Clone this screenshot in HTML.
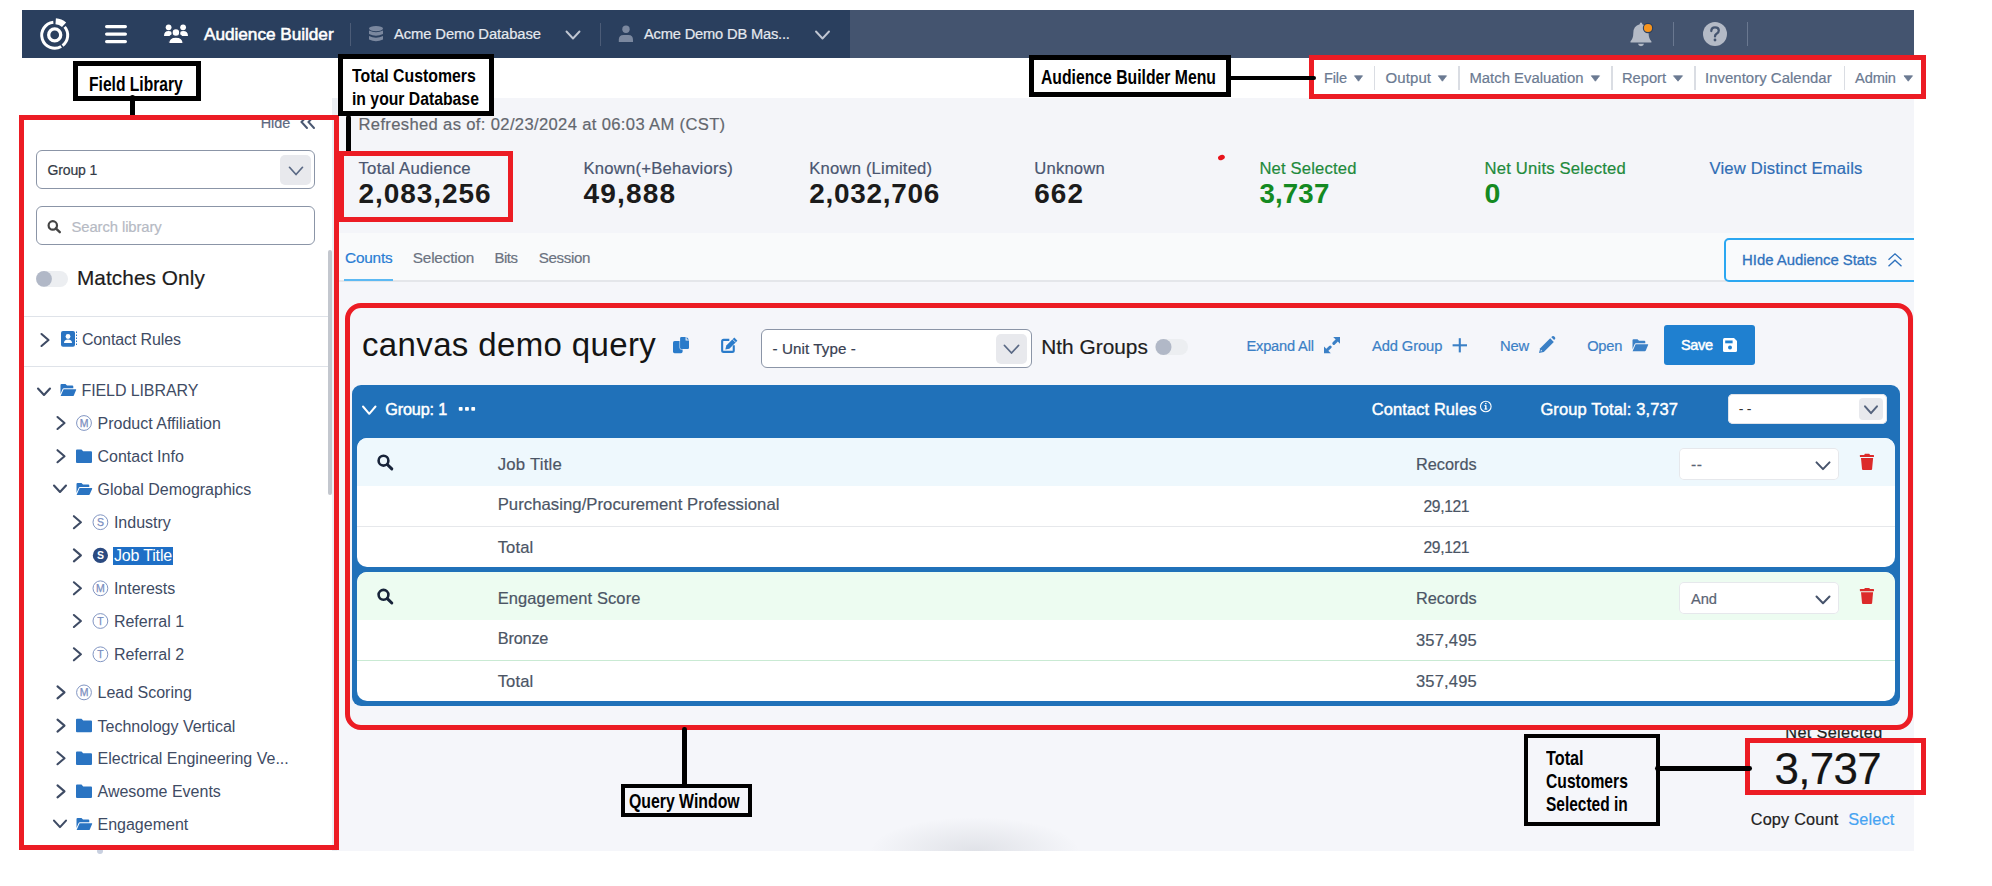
<!DOCTYPE html>
<html><head><meta charset="utf-8"><title>Audience Builder</title>
<style>
html,body{margin:0;padding:0;}
body{width:1992px;height:886px;position:relative;overflow:hidden;background:#fff;font-family:"Liberation Sans", sans-serif;}
body>div,body>svg{position:absolute;}
</style></head><body>
<div style="left:332px;top:98px;width:1582px;height:753px;background:#f5f6fa;"></div>
<div style="left:332px;top:98px;width:1582px;height:135px;background:#f4f5f9;"></div>
<div style="left:332px;top:233px;width:1582px;height:47px;background:#f9fafb;"></div>
<div style="left:332px;top:280px;width:1582px;height:1.6000000000000227px;background:#e4e6ea;"></div>
<div style="left:332px;top:98px;width:5px;height:753px;background:#edf0f4;"></div>
<div style="left:860px;top:815px;width:230px;height:36px;background:radial-gradient(ellipse 105px 34px at 50% 100%, rgba(40,50,70,0.10), rgba(40,50,70,0) 100%);"></div>
<div style="left:22px;top:10px;width:828px;height:48px;background:#2a3f5e;"></div>
<div style="left:850px;top:10px;width:1064px;height:48px;background:#44546f;"></div>
<svg style="left:0px;top:0px;" width="120" height="70" viewBox="0 0 120 70"><path d="M61.20 46.46A13.0 13.0 0 1 1 53.34 22.27" fill="none" stroke="#fff" stroke-width="3.0"/><path d="M64.66 26.84A13.0 13.0 0 0 1 62.52 45.58" fill="none" stroke="#fff" stroke-width="3.0"/><path d="M55.68 21.23A14.0 14.0 0 0 1 64.07 24.80" fill="none" stroke="#fff" stroke-width="6.2"/><circle cx="54.7" cy="34.900000000000006" r="6" fill="none" stroke="#fff" stroke-width="3.3"/></svg>
<svg style="left:0px;top:0px;" width="140" height="70" viewBox="0 0 140 70"><line x1="106.6" y1="26.6" x2="125.4" y2="26.6" stroke="#fff" stroke-width="3.2" stroke-linecap="round"/><line x1="106.6" y1="34.1" x2="125.4" y2="34.1" stroke="#fff" stroke-width="3.2" stroke-linecap="round"/><line x1="106.6" y1="41.6" x2="125.4" y2="41.6" stroke="#fff" stroke-width="3.2" stroke-linecap="round"/></svg>
<svg style="left:0px;top:0px;" width="200" height="60" viewBox="0 0 200 60"><circle cx="168.6" cy="27.3" r="2.9" fill="#fff"/><circle cx="183.1" cy="27.3" r="2.9" fill="#fff"/><path d="M164 36 Q164 31 168.6 31 Q172 31 172.8 33.5 Q170 35 169.5 36 Z" fill="#fff"/><path d="M188 36 Q188 31 183.1 31 Q179.7 31 179 33.5 Q181.8 35 182.2 36 Z" fill="#fff"/><circle cx="175.9" cy="32.4" r="3.9" fill="#fff" stroke="#2c3e5d" stroke-width="1.3"/><path d="M168.6 43.6 Q168.6 37 175.9 37 Q183.2 37 183.2 43.6 Z" fill="#fff" stroke="#2c3e5d" stroke-width="1.3"/></svg>
<div style="left:204.0px;top:24.00px;font-family:'Liberation Sans', sans-serif;font-size:17.23px;font-weight:400;color:#ffffff;-webkit-text-stroke:0.55px #ffffff;letter-spacing:-0.036px;white-space:nowrap;line-height:normal;">Audience Builder</div>
<div style="left:350px;top:22.5px;width:1.1999999999999886px;height:23.0px;background:#4c5c77;"></div>
<svg style="left:0px;top:0px;" width="400" height="60" viewBox="0 0 400 60"><ellipse cx="376" cy="28.6" rx="7" ry="2.6" fill="#7b889f"/><path d="M369 30.5 Q376 34 383 30.5 V34 Q376 37.5 369 34 Z" fill="#7b889f"/><path d="M369 36 Q376 39.5 383 36 V39.4 Q376 43 369 39.4 Z" fill="#7b889f"/></svg>
<div style="left:394.0px;top:26.00px;font-family:'Liberation Sans', sans-serif;font-size:14.79px;font-weight:400;color:#e6e9ef;-webkit-text-stroke:0.2px #e6e9ef;letter-spacing:-0.106px;white-space:nowrap;line-height:normal;">Acme Demo Database</div>
<svg style="left:0px;top:0px;" width="600" height="60" viewBox="0 0 600 60"><polyline points="566.5,31.5 573.0,38.5 579.5,31.5" fill="none" stroke="#c0c6d2" stroke-width="1.9" stroke-linecap="round" stroke-linejoin="round"/></svg>
<div style="left:600px;top:22.5px;width:1.2000000000000455px;height:23.299999999999997px;background:#4c5c77;"></div>
<svg style="left:0px;top:0px;" width="650" height="60" viewBox="0 0 650 60"><circle cx="626" cy="29.3" r="3.7" fill="#7b889f"/><path d="M618.8 42 V39.8 Q618.8 35 623.5 35 H628.5 Q633 35 633 39.8 V42 Z" fill="#7b889f"/></svg>
<div style="left:644.0px;top:26.00px;font-family:'Liberation Sans', sans-serif;font-size:14.66px;font-weight:400;color:#e6e9ef;-webkit-text-stroke:0.2px #e6e9ef;letter-spacing:-0.173px;white-space:nowrap;line-height:normal;">Acme Demo DB Mas...</div>
<svg style="left:0px;top:0px;" width="850" height="60" viewBox="0 0 850 60"><polyline points="816,31.5 822.5,38.5 829,31.5" fill="none" stroke="#c0c6d2" stroke-width="1.9" stroke-linecap="round" stroke-linejoin="round"/></svg>
<svg style="left:0px;top:0px;" width="1700" height="60" viewBox="0 0 1700 60"><path d="M1641 22.5 Q1642.3 22.5 1642.3 24.2 Q1648.6 25.8 1648.6 33 Q1648.6 38.5 1651.4 41.2 V42.6 H1630.5 V41.2 Q1633.3 38.5 1633.3 33 Q1633.3 25.8 1639.7 24.2 Q1639.7 22.5 1641 22.5 Z" fill="#b4bac6"/><path d="M1638 43.8 H1644 Q1643.6 46.2 1641 46.2 Q1638.4 46.2 1638 43.8 Z" fill="#b4bac6"/><circle cx="1648" cy="28" r="5.2" fill="#2c3e5d"/><circle cx="1648" cy="28" r="4.1" fill="#f7941d"/></svg>
<div style="left:1673px;top:22px;width:1.2000000000000455px;height:23.700000000000003px;background:#6a7890;"></div>
<svg style="left:0px;top:0px;" width="1800" height="60" viewBox="0 0 1800 60"><circle cx="1715" cy="34" r="12" fill="#b4bac6"/><path d="M1711.3 31 Q1711.3 27.3 1715 27.3 Q1718.8 27.3 1718.8 30.6 Q1718.8 32.6 1716.6 33.8 Q1715 34.7 1715 36.4" fill="none" stroke="#44546f" stroke-width="2.3" stroke-linecap="round"/><circle cx="1715" cy="40" r="1.4" fill="#44546f"/></svg>
<div style="left:1746.8px;top:22px;width:1.2000000000000455px;height:23.700000000000003px;background:#6a7890;"></div>
<div style="left:1324.0px;top:70.00px;font-family:'Liberation Sans', sans-serif;font-size:14.55px;font-weight:400;color:#6b7a92;-webkit-text-stroke:0.2px #6b7a92;letter-spacing:-0.148px;white-space:nowrap;line-height:normal;">File</div>
<div style="left:1385.5px;top:69.00px;font-family:'Liberation Sans', sans-serif;font-size:14.99px;font-weight:400;color:#6b7a92;-webkit-text-stroke:0.2px #6b7a92;letter-spacing:0.099px;white-space:nowrap;line-height:normal;">Output</div>
<div style="left:1469.5px;top:70.00px;font-family:'Liberation Sans', sans-serif;font-size:14.84px;font-weight:400;color:#6b7a92;-webkit-text-stroke:0.2px #6b7a92;letter-spacing:0.009px;white-space:nowrap;line-height:normal;">Match Evaluation</div>
<div style="left:1622.0px;top:70.00px;font-family:'Liberation Sans', sans-serif;font-size:14.74px;font-weight:400;color:#6b7a92;-webkit-text-stroke:0.2px #6b7a92;letter-spacing:-0.050px;white-space:nowrap;line-height:normal;">Report</div>
<div style="left:1705.0px;top:70.00px;font-family:'Liberation Sans', sans-serif;font-size:14.91px;font-weight:400;color:#6b7a92;-webkit-text-stroke:0.2px #6b7a92;letter-spacing:0.042px;white-space:nowrap;line-height:normal;">Inventory Calendar</div>
<div style="left:1855.0px;top:70.00px;font-family:'Liberation Sans', sans-serif;font-size:14.65px;font-weight:400;color:#6b7a92;-webkit-text-stroke:0.2px #6b7a92;letter-spacing:-0.128px;white-space:nowrap;line-height:normal;">Admin</div>
<svg style="left:0px;top:0px;" width="1992" height="100" viewBox="0 0 1992 100"><path d="M1354.5 75.8 H1362.5 L1358.5 81.2 Z" fill="#6b7a92" stroke="#6b7a92" stroke-width="0.8" stroke-linejoin="round"/><path d="M1438.3 75.8 H1446.5 L1442.4 81.2 Z" fill="#6b7a92" stroke="#6b7a92" stroke-width="0.8" stroke-linejoin="round"/><path d="M1591.3 75.8 H1599.5 L1595.4 81.2 Z" fill="#6b7a92" stroke="#6b7a92" stroke-width="0.8" stroke-linejoin="round"/><path d="M1673.5 75.8 H1682.5 L1678.0 81.2 Z" fill="#6b7a92" stroke="#6b7a92" stroke-width="0.8" stroke-linejoin="round"/><path d="M1904 75.8 H1912.5 L1908.25 81.2 Z" fill="#6b7a92" stroke="#6b7a92" stroke-width="0.8" stroke-linejoin="round"/></svg>
<div style="left:1374.2px;top:66px;width:1.2000000000000455px;height:23.5px;background:#dadde3;"></div>
<div style="left:1458.4px;top:66px;width:1.2000000000000455px;height:23.5px;background:#dadde3;"></div>
<div style="left:1611.4px;top:66px;width:1.2000000000000455px;height:23.5px;background:#dadde3;"></div>
<div style="left:1694.4px;top:66px;width:1.2000000000000455px;height:23.5px;background:#dadde3;"></div>
<div style="left:1844.3px;top:66px;width:1.2000000000000455px;height:23.5px;background:#dadde3;"></div>
<div style="left:358.5px;top:115.00px;font-family:'Liberation Sans', sans-serif;font-size:16.58px;font-weight:400;color:#63676e;-webkit-text-stroke:0.2px #63676e;letter-spacing:0.353px;white-space:nowrap;line-height:normal;">Refreshed as of: 02/23/2024 at 06:03 AM (CST)</div>
<div style="left:358.5px;top:159.00px;font-family:'Liberation Sans', sans-serif;font-size:16.75px;font-weight:400;color:#4a5670;-webkit-text-stroke:0.2px #4a5670;letter-spacing:0.239px;white-space:nowrap;line-height:normal;">Total Audience</div>
<div style="left:358.5px;top:178.00px;font-family:'Liberation Sans', sans-serif;font-size:28.03px;font-weight:700;color:#1b1b1b;letter-spacing:0.924px;white-space:nowrap;line-height:normal;">2,083,256</div>
<div style="left:583.5px;top:159.00px;font-family:'Liberation Sans', sans-serif;font-size:16.67px;font-weight:400;color:#4a5670;-webkit-text-stroke:0.2px #4a5670;letter-spacing:0.215px;white-space:nowrap;line-height:normal;">Known(+Behaviors)</div>
<div style="left:583.5px;top:178.00px;font-family:'Liberation Sans', sans-serif;font-size:28.08px;font-weight:700;color:#1b1b1b;letter-spacing:1.125px;white-space:nowrap;line-height:normal;">49,888</div>
<div style="left:809.3px;top:159.00px;font-family:'Liberation Sans', sans-serif;font-size:16.64px;font-weight:400;color:#4a5670;-webkit-text-stroke:0.2px #4a5670;letter-spacing:0.189px;white-space:nowrap;line-height:normal;">Known (Limited)</div>
<div style="left:809.3px;top:178.00px;font-family:'Liberation Sans', sans-serif;font-size:27.94px;font-weight:700;color:#1b1b1b;letter-spacing:0.714px;white-space:nowrap;line-height:normal;">2,032,706</div>
<div style="left:1034.2px;top:159.00px;font-family:'Liberation Sans', sans-serif;font-size:16.61px;font-weight:400;color:#4a5670;-webkit-text-stroke:0.2px #4a5670;letter-spacing:0.228px;white-space:nowrap;line-height:normal;">Unknown</div>
<div style="left:1034.2px;top:178.00px;font-family:'Liberation Sans', sans-serif;font-size:27.95px;font-weight:700;color:#1b1b1b;letter-spacing:1.129px;white-space:nowrap;line-height:normal;">662</div>
<div style="left:1259.4px;top:159.00px;font-family:'Liberation Sans', sans-serif;font-size:16.63px;font-weight:400;color:#1f8a3c;-webkit-text-stroke:0.2px #1f8a3c;letter-spacing:0.181px;white-space:nowrap;line-height:normal;">Net Selected</div>
<div style="left:1259.4px;top:178.00px;font-family:'Liberation Sans', sans-serif;font-size:27.68px;font-weight:700;color:#148a22;letter-spacing:0.158px;white-space:nowrap;line-height:normal;">3,737</div>
<div style="left:1484.5px;top:159.00px;font-family:'Liberation Sans', sans-serif;font-size:16.67px;font-weight:400;color:#1f8a3c;-webkit-text-stroke:0.2px #1f8a3c;letter-spacing:0.191px;white-space:nowrap;line-height:normal;">Net Units Selected</div>
<div style="left:1484.5px;top:177.00px;font-family:'Liberation Sans', sans-serif;font-size:28.50px;font-weight:700;color:#148a22;letter-spacing:0.000px;white-space:nowrap;line-height:normal;">0</div>
<div style="left:1709.5px;top:159.00px;font-family:'Liberation Sans', sans-serif;font-size:16.65px;font-weight:400;color:#2f6db5;-webkit-text-stroke:0.2px #2f6db5;letter-spacing:0.175px;white-space:nowrap;line-height:normal;">View Distinct Emails</div>
<div style="left:1217.8px;top:155px;width:7px;height:5.4px;border-radius:50%;background:#e8141c;transform:rotate(-20deg)"></div>
<div style="left:345.0px;top:249.00px;font-family:'Liberation Sans', sans-serif;font-size:15.38px;font-weight:400;color:#2a7dd4;-webkit-text-stroke:0.2px #2a7dd4;letter-spacing:-0.204px;white-space:nowrap;line-height:normal;">Counts</div>
<div style="left:412.8px;top:249.00px;font-family:'Liberation Sans', sans-serif;font-size:15.32px;font-weight:400;color:#6b7280;-webkit-text-stroke:0.2px #6b7280;letter-spacing:-0.192px;white-space:nowrap;line-height:normal;">Selection</div>
<div style="left:494.4px;top:249.00px;font-family:'Liberation Sans', sans-serif;font-size:14.93px;font-weight:400;color:#6b7280;-webkit-text-stroke:0.2px #6b7280;letter-spacing:-0.428px;white-space:nowrap;line-height:normal;">Bits</div>
<div style="left:538.8px;top:249.00px;font-family:'Liberation Sans', sans-serif;font-size:15.11px;font-weight:400;color:#6b7280;-webkit-text-stroke:0.2px #6b7280;letter-spacing:-0.346px;white-space:nowrap;line-height:normal;">Session</div>
<div style="left:344px;top:278.5px;width:48.69999999999999px;height:2.5px;background:#5cb9f3;"></div>
<div style="left:1723.7px;top:238px;width:206.29999999999995px;height:43.60000000000002px;box-sizing:border-box;border:2px solid #2ba7f1;border-radius:5px;background:#f9fafc;"></div>
<div style="left:1742.1px;top:252.00px;font-family:'Liberation Sans', sans-serif;font-size:14.91px;font-weight:400;color:#2f72bd;-webkit-text-stroke:0.3px #2f72bd;letter-spacing:-0.030px;white-space:nowrap;line-height:normal;">HIde Audience Stats</div>
<svg style="left:0px;top:0px;" width="1992" height="300" viewBox="0 0 1992 300"><polyline points="1888.5,259.8 1895,253.8 1901.5,259.8" fill="none" stroke="#2f72bd" stroke-width="1.3"/><polyline points="1888.5,266.2 1895,260.2 1901.5,266.2" fill="none" stroke="#2f72bd" stroke-width="1.3"/></svg>
<div style="left:1914px;top:230px;width:78px;height:70px;background:#ffffff;"></div>
<div style="left:260.8px;top:115.00px;font-family:'Liberation Sans', sans-serif;font-size:14.42px;font-weight:400;color:#5d6980;-webkit-text-stroke:0.2px #5d6980;letter-spacing:-0.082px;white-space:nowrap;line-height:normal;">Hide</div>
<svg style="left:0px;top:0px;" width="340" height="140" viewBox="0 0 340 140"><polyline points="307,116 301.5,122 307,128" fill="none" stroke="#4a5872" stroke-width="2" stroke-linecap="round"/><polyline points="314,116 308.5,122 314,128" fill="none" stroke="#4a5872" stroke-width="2" stroke-linecap="round"/></svg>
<div style="left:36.3px;top:150.3px;width:279.09999999999997px;height:39.0px;box-sizing:border-box;border:1.1px solid #8b95a7;border-radius:6px;background:#fff;"></div>
<div style="left:280.1px;top:155.4px;width:30.69999999999999px;height:29.400000000000006px;background:#e8e9ed;border-radius:5px;"></div>
<svg style="left:0px;top:0px;" width="340" height="200" viewBox="0 0 340 200"><polyline points="289.5,167.3 296.0,174.5 302.5,167.3" fill="none" stroke="#5a6985" stroke-width="1.7" stroke-linecap="round" stroke-linejoin="round"/></svg>
<div style="left:47.5px;top:162.00px;font-family:'Liberation Sans', sans-serif;font-size:14.00px;font-weight:400;color:#333a46;-webkit-text-stroke:0.2px #333a46;letter-spacing:-0.147px;white-space:nowrap;line-height:normal;">Group 1</div>
<div style="left:36.3px;top:206.3px;width:279.09999999999997px;height:39.0px;box-sizing:border-box;border:1.1px solid #8b95a7;border-radius:6px;background:#fff;"></div>
<svg style="left:0px;top:0px;" width="340" height="260" viewBox="0 0 340 260"><circle cx="52.8" cy="225.4" r="4.2" fill="none" stroke="#444" stroke-width="2.2"/><line x1="55.8" y1="228.4" x2="59.8" y2="232.2" stroke="#444" stroke-width="2.4" stroke-linecap="round"/></svg>
<div style="left:71.5px;top:219.00px;font-family:'Liberation Sans', sans-serif;font-size:14.80px;font-weight:400;color:#b6bac4;-webkit-text-stroke:0.2px #b6bac4;letter-spacing:-0.079px;white-space:nowrap;line-height:normal;">Search library</div>
<div style="left:36px;top:271px;width:32px;height:15.600000000000023px;background:#eceef1;border-radius:8px;"></div>
<svg style="left:0px;top:0px;" width="100" height="300" viewBox="0 0 100 300"><circle cx="44" cy="278.8" r="7.9" fill="#b1b8c7"/></svg>
<div style="left:77.0px;top:266.00px;font-family:'Liberation Sans', sans-serif;font-size:20.77px;font-weight:400;color:#1c1c1c;-webkit-text-stroke:0.2px #1c1c1c;letter-spacing:0.074px;white-space:nowrap;line-height:normal;">Matches Only</div>
<div style="left:24px;top:315.5px;width:304px;height:1.1999999999999886px;background:#dfe3e9;"></div>
<div style="left:327.6px;top:250px;width:4.399999999999977px;height:245px;background:#c3c7ce;border-radius:2px;"></div>
<svg style="left:0px;top:0px;" width="340" height="360" viewBox="0 0 340 360"><polyline points="41.5,334 48.5,340.0 41.5,346" fill="none" stroke="#3e4b64" stroke-width="2.1" stroke-linecap="round" stroke-linejoin="round"/></svg>
<svg style="left:0px;top:0px;" width="340" height="360" viewBox="0 0 340 360"><rect x="61" y="331" width="14" height="15.8" rx="2" fill="#2a74c2"/><circle cx="68" cy="336.5" r="2.4" fill="#fff"/><path d="M64 343 Q64 339.4 68 339.4 Q72 339.4 72 343 Z" fill="#fff"/><line x1="76.5" y1="331.5" x2="76.5" y2="346" stroke="#2a74c2" stroke-width="1" stroke-dasharray="1.5 1.5"/></svg>
<div style="left:81.9px;top:331.00px;font-family:'Liberation Sans', sans-serif;font-size:16.00px;font-weight:400;color:#3e4b64;letter-spacing:-0.116px;white-space:nowrap;line-height:normal;">Contact Rules</div>
<div style="left:24px;top:366px;width:304px;height:1.1999999999999886px;background:#dfe3e9;"></div>
<div style="left:81.5px;top:382.00px;font-family:'Liberation Sans', sans-serif;font-size:16.00px;font-weight:400;color:#3e4b64;letter-spacing:-0.097px;white-space:nowrap;line-height:normal;">FIELD LIBRARY</div>
<div style="left:97.5px;top:415.00px;font-family:'Liberation Sans', sans-serif;font-size:16.00px;font-weight:400;color:#3e4b64;letter-spacing:0.000px;white-space:nowrap;line-height:normal;">Product Affiliation</div>
<div style="left:97.5px;top:448.00px;font-family:'Liberation Sans', sans-serif;font-size:16.00px;font-weight:400;color:#3e4b64;letter-spacing:0.000px;white-space:nowrap;line-height:normal;">Contact Info</div>
<div style="left:97.5px;top:481.00px;font-family:'Liberation Sans', sans-serif;font-size:16.00px;font-weight:400;color:#3e4b64;letter-spacing:0.000px;white-space:nowrap;line-height:normal;">Global Demographics</div>
<div style="left:113.9px;top:514.00px;font-family:'Liberation Sans', sans-serif;font-size:16.00px;font-weight:400;color:#3e4b64;letter-spacing:0.000px;white-space:nowrap;line-height:normal;">Industry</div>
<div style="left:112.8px;top:547px;width:60.2px;height:17.600000000000023px;background:#1e6fc6;"></div>
<div style="left:113.9px;top:547.00px;font-family:'Liberation Sans', sans-serif;font-size:16.00px;font-weight:400;color:#ffffff;letter-spacing:-0.159px;white-space:nowrap;line-height:normal;">Job Title</div>
<div style="left:113.9px;top:580.00px;font-family:'Liberation Sans', sans-serif;font-size:16.00px;font-weight:400;color:#3e4b64;letter-spacing:0.000px;white-space:nowrap;line-height:normal;">Interests</div>
<div style="left:113.9px;top:613.00px;font-family:'Liberation Sans', sans-serif;font-size:16.00px;font-weight:400;color:#3e4b64;letter-spacing:0.000px;white-space:nowrap;line-height:normal;">Referral 1</div>
<div style="left:113.9px;top:646.00px;font-family:'Liberation Sans', sans-serif;font-size:16.00px;font-weight:400;color:#3e4b64;letter-spacing:0.000px;white-space:nowrap;line-height:normal;">Referral 2</div>
<div style="left:97.5px;top:684.00px;font-family:'Liberation Sans', sans-serif;font-size:16.00px;font-weight:400;color:#3e4b64;letter-spacing:0.000px;white-space:nowrap;line-height:normal;">Lead Scoring</div>
<div style="left:97.5px;top:718.00px;font-family:'Liberation Sans', sans-serif;font-size:16.00px;font-weight:400;color:#3e4b64;letter-spacing:0.000px;white-space:nowrap;line-height:normal;">Technology Vertical</div>
<div style="left:97.5px;top:750.00px;font-family:'Liberation Sans', sans-serif;font-size:16.00px;font-weight:400;color:#3e4b64;letter-spacing:0.000px;white-space:nowrap;line-height:normal;">Electrical Engineering Ve...</div>
<div style="left:97.5px;top:783.00px;font-family:'Liberation Sans', sans-serif;font-size:16.00px;font-weight:400;color:#3e4b64;letter-spacing:0.000px;white-space:nowrap;line-height:normal;">Awesome Events</div>
<div style="left:97.5px;top:816.00px;font-family:'Liberation Sans', sans-serif;font-size:16.00px;font-weight:400;color:#3e4b64;letter-spacing:0.000px;white-space:nowrap;line-height:normal;">Engagement</div>
<svg style="left:0px;top:0px;" width="340" height="886" viewBox="0 0 340 886"><polyline points="38,388.5 44.0,395 50,388.5" fill="none" stroke="#3e4b64" stroke-width="2.1" stroke-linecap="round" stroke-linejoin="round"/><path d="M60.5 394.1 V385.1 Q60.5 384.1 61.5 384.1 H65.5 L67 385.6 H72.3 Q73.3 385.6 73.3 386.6 V388.20000000000005 H64 Q63 388.20000000000005 62.6 389.1 Z" fill="#2a74c2"/><path d="M63.6 389.20000000000005 H75.8 Q76.4 389.20000000000005 76.1 390.0 L73.8 395.40000000000003 Q73.5 396.1 72.8 396.1 H60.6 Z" fill="#2a74c2"/><polyline points="57.5,417.0 64.5,423.0 57.5,429.0" fill="none" stroke="#3e4b64" stroke-width="2.1" stroke-linecap="round" stroke-linejoin="round"/><circle cx="84" cy="423.0" r="7.4" fill="none" stroke="#8195c2" stroke-width="1"/><text x="84" y="426.8" font-family="Liberation Sans" font-size="10.5" fill="#7a8ec0" stroke="#7a8ec0" stroke-width="0.25" text-anchor="middle">M</text><polyline points="57.5,450.2 64.5,456.2 57.5,462.2" fill="none" stroke="#3e4b64" stroke-width="2.1" stroke-linecap="round" stroke-linejoin="round"/><path d="M76 450.4 Q76 449.4 77 449.4 H81.5 L83.2 451.2 H91 Q92 451.2 92 452.2 V461.9 Q92 462.9 91 462.9 H77 Q76 462.9 76 461.9 Z" fill="#2a74c2"/><rect x="76" y="452.59999999999997" width="16" height="0.9" fill="#fff" opacity="0.0"/><polyline points="54,485.5 60.0,492.0 66,485.5" fill="none" stroke="#3e4b64" stroke-width="2.1" stroke-linecap="round" stroke-linejoin="round"/><path d="M76.5 493.0 V484.0 Q76.5 483.0 77.5 483.0 H81.5 L83 484.5 H88.3 Q89.3 484.5 89.3 485.5 V487.1 H80 Q79 487.1 78.6 488.0 Z" fill="#2a74c2"/><path d="M79.6 488.1 H91.8 Q92.4 488.1 92.1 488.9 L89.8 494.3 Q89.5 495.0 88.8 495.0 H76.6 Z" fill="#2a74c2"/><polyline points="73.9,516.2 80.9,522.2 73.9,528.2" fill="none" stroke="#3e4b64" stroke-width="2.1" stroke-linecap="round" stroke-linejoin="round"/><circle cx="100.4" cy="522.2" r="7.4" fill="none" stroke="#8195c2" stroke-width="1"/><text x="100.4" y="526.0" font-family="Liberation Sans" font-size="10.5" fill="#7a8ec0" stroke="#7a8ec0" stroke-width="0.25" text-anchor="middle">S</text><polyline points="73.9,549.4 80.9,555.4 73.9,561.4" fill="none" stroke="#3e4b64" stroke-width="2.1" stroke-linecap="round" stroke-linejoin="round"/><circle cx="100.4" cy="555.4" r="7.6" fill="#2b4a80"/><text x="100.4" y="559.3" font-family="Liberation Sans" font-weight="700" font-size="10.5" fill="#fff" text-anchor="middle">S</text><polyline points="73.9,582.3 80.9,588.3 73.9,594.3" fill="none" stroke="#3e4b64" stroke-width="2.1" stroke-linecap="round" stroke-linejoin="round"/><circle cx="100.4" cy="588.3" r="7.4" fill="none" stroke="#8195c2" stroke-width="1"/><text x="100.4" y="592.0999999999999" font-family="Liberation Sans" font-size="10.5" fill="#7a8ec0" stroke="#7a8ec0" stroke-width="0.25" text-anchor="middle">M</text><polyline points="73.9,615.0 80.9,621.0 73.9,627.0" fill="none" stroke="#3e4b64" stroke-width="2.1" stroke-linecap="round" stroke-linejoin="round"/><circle cx="100.4" cy="621.0" r="7.4" fill="none" stroke="#8195c2" stroke-width="1"/><text x="100.4" y="624.8" font-family="Liberation Sans" font-size="10.5" fill="#7a8ec0" stroke="#7a8ec0" stroke-width="0.25" text-anchor="middle">T</text><polyline points="73.9,648.3 80.9,654.3 73.9,660.3" fill="none" stroke="#3e4b64" stroke-width="2.1" stroke-linecap="round" stroke-linejoin="round"/><circle cx="100.4" cy="654.3" r="7.4" fill="none" stroke="#8195c2" stroke-width="1"/><text x="100.4" y="658.0999999999999" font-family="Liberation Sans" font-size="10.5" fill="#7a8ec0" stroke="#7a8ec0" stroke-width="0.25" text-anchor="middle">T</text><polyline points="57.5,686.4 64.5,692.4 57.5,698.4" fill="none" stroke="#3e4b64" stroke-width="2.1" stroke-linecap="round" stroke-linejoin="round"/><circle cx="84" cy="692.4" r="7.4" fill="none" stroke="#8195c2" stroke-width="1"/><text x="84" y="696.1999999999999" font-family="Liberation Sans" font-size="10.5" fill="#7a8ec0" stroke="#7a8ec0" stroke-width="0.25" text-anchor="middle">M</text><polyline points="57.5,719.6 64.5,725.6 57.5,731.6" fill="none" stroke="#3e4b64" stroke-width="2.1" stroke-linecap="round" stroke-linejoin="round"/><path d="M76 719.8000000000001 Q76 718.8000000000001 77 718.8000000000001 H81.5 L83.2 720.6 H91 Q92 720.6 92 721.6 V731.3000000000001 Q92 732.3000000000001 91 732.3000000000001 H77 Q76 732.3000000000001 76 731.3000000000001 Z" fill="#2a74c2"/><rect x="76" y="722.0000000000001" width="16" height="0.9" fill="#fff" opacity="0.0"/><polyline points="57.5,752.2 64.5,758.2 57.5,764.2" fill="none" stroke="#3e4b64" stroke-width="2.1" stroke-linecap="round" stroke-linejoin="round"/><path d="M76 752.4000000000001 Q76 751.4000000000001 77 751.4000000000001 H81.5 L83.2 753.2 H91 Q92 753.2 92 754.2 V763.9000000000001 Q92 764.9000000000001 91 764.9000000000001 H77 Q76 764.9000000000001 76 763.9000000000001 Z" fill="#2a74c2"/><rect x="76" y="754.6000000000001" width="16" height="0.9" fill="#fff" opacity="0.0"/><polyline points="57.5,785.4 64.5,791.4 57.5,797.4" fill="none" stroke="#3e4b64" stroke-width="2.1" stroke-linecap="round" stroke-linejoin="round"/><path d="M76 785.6 Q76 784.6 77 784.6 H81.5 L83.2 786.4 H91 Q92 786.4 92 787.4 V797.1 Q92 798.1 91 798.1 H77 Q76 798.1 76 797.1 Z" fill="#2a74c2"/><rect x="76" y="787.8000000000001" width="16" height="0.9" fill="#fff" opacity="0.0"/><polyline points="54,820.6 60.0,827.1 66,820.6" fill="none" stroke="#3e4b64" stroke-width="2.1" stroke-linecap="round" stroke-linejoin="round"/><path d="M76.5 828.1 V819.1 Q76.5 818.1 77.5 818.1 H81.5 L83 819.6 H88.3 Q89.3 819.6 89.3 820.6 V822.2 H80 Q79 822.2 78.6 823.1 Z" fill="#2a74c2"/><path d="M79.6 823.2 H91.8 Q92.4 823.2 92.1 824.0 L89.8 829.4 Q89.5 830.1 88.8 830.1 H76.6 Z" fill="#2a74c2"/><circle cx="100" cy="851" r="3" fill="#c8d0e0"/></svg>
<div style="left:362.0px;top:326.00px;font-family:'Liberation Sans', sans-serif;font-size:33.00px;font-weight:400;color:#141414;letter-spacing:0.363px;white-space:nowrap;line-height:normal;">canvas demo query</div>
<svg style="left:0px;top:0px;" width="760" height="380" viewBox="0 0 760 380"><rect x="673" y="341" width="9.6" height="12.2" rx="1.6" fill="#2a7bca"/><path d="M680.1 338.3 Q680.1 337 681.4 337 H685.6 V340.4 H689 V347.7 Q689 349 687.7 349 H681.4 Q680.1 349 680.1 347.7 Z" fill="#2a7bca" stroke="#f5f6fa" stroke-width="1.1" paint-order="stroke"/><path d="M686.6 337 L689 339.4 H686.6 Z" fill="#2a7bca"/><path d="M729.3 339.85 H723.6 Q722.15 339.85 722.15 341.3 V350.4 Q722.15 351.85 723.6 351.85 H732.3 Q733.75 351.85 733.75 350.4 V345.2" fill="none" stroke="#2a7bca" stroke-width="2.1"/><path d="M726.3 345.6 L734.3 337.6 L737.4 340.7 L729.4 348.7 L725.3 349.6 Z" fill="#2a7bca" stroke="#f5f6fa" stroke-width="1" paint-order="stroke"/><line x1="732.6" y1="339.3" x2="735.7" y2="342.4" stroke="#f5f6fa" stroke-width="0.8"/></svg>
<div style="left:761.3px;top:329.4px;width:270.4000000000001px;height:39.10000000000002px;box-sizing:border-box;border:1.3px solid #8b95a7;border-radius:6px;background:#fff;"></div>
<div style="left:996px;top:333.9px;width:31px;height:30.100000000000023px;background:#e8e9ed;border-radius:5px;"></div>
<svg style="left:0px;top:0px;" width="1040" height="380" viewBox="0 0 1040 380"><polyline points="1004.5,345.5 1011.5,353 1018.5,345.5" fill="none" stroke="#5a6985" stroke-width="1.8" stroke-linecap="round" stroke-linejoin="round"/></svg>
<div style="left:772.6px;top:340.00px;font-family:'Liberation Sans', sans-serif;font-size:15.16px;font-weight:400;color:#394152;-webkit-text-stroke:0.2px #394152;letter-spacing:0.086px;white-space:nowrap;line-height:normal;">- Unit Type -</div>
<div style="left:1041.2px;top:335.00px;font-family:'Liberation Sans', sans-serif;font-size:20.83px;font-weight:400;color:#1e1e1e;-webkit-text-stroke:0.2px #1e1e1e;letter-spacing:0.023px;white-space:nowrap;line-height:normal;">Nth Groups</div>
<div style="left:1155.4px;top:338.9px;width:32.59999999999991px;height:16.30000000000001px;background:#eceef1;border-radius:8px;"></div>
<svg style="left:0px;top:0px;" width="1200" height="380" viewBox="0 0 1200 380"><circle cx="1163.5" cy="347" r="8" fill="#b1b8c7"/></svg>
<div style="left:1246.4px;top:338.00px;font-family:'Liberation Sans', sans-serif;font-size:14.65px;font-weight:400;color:#3b80c6;-webkit-text-stroke:0.2px #3b80c6;letter-spacing:-0.171px;white-space:nowrap;line-height:normal;">Expand All</div>
<div style="left:1372.0px;top:338.00px;font-family:'Liberation Sans', sans-serif;font-size:14.76px;font-weight:400;color:#3b80c6;-webkit-text-stroke:0.2px #3b80c6;letter-spacing:-0.125px;white-space:nowrap;line-height:normal;">Add Group</div>
<div style="left:1500.0px;top:338.00px;font-family:'Liberation Sans', sans-serif;font-size:14.78px;font-weight:400;color:#3b80c6;-webkit-text-stroke:0.2px #3b80c6;letter-spacing:-0.187px;white-space:nowrap;line-height:normal;">New</div>
<div style="left:1587.2px;top:338.00px;font-family:'Liberation Sans', sans-serif;font-size:14.66px;font-weight:400;color:#3b80c6;-webkit-text-stroke:0.2px #3b80c6;letter-spacing:-0.254px;white-space:nowrap;line-height:normal;">Open</div>
<svg style="left:0px;top:0px;" width="1700" height="380" viewBox="0 0 1700 380"><path d="M1333.2 337 H1340 V343.8 Z" fill="#3b80c6"/><line x1="1336.6" y1="340.6" x2="1333.8" y2="343.4" stroke="#3b80c6" stroke-width="3" stroke-linecap="round"/><path d="M1324 346.4 V353.2 H1330.8 Z" fill="#3b80c6"/><line x1="1327.4" y1="349.8" x2="1330.2" y2="347" stroke="#3b80c6" stroke-width="3" stroke-linecap="round"/><line x1="1459.8" y1="338.2" x2="1459.8" y2="352.4" stroke="#3b80c6" stroke-width="2.1"/><line x1="1452.6" y1="345.3" x2="1467" y2="345.3" stroke="#3b80c6" stroke-width="2.1"/><path d="M1539 352.9 L1540.2 348.3 L1550.2 338.3 L1553.8 341.9 L1543.8 351.9 Z" fill="#3b80c6"/><path d="M1551.3 337.2 L1552.2 336.3 Q1553.1 335.6 1554 336.3 L1555 337.3 Q1555.7 338.2 1555 339.1 L1554.1 340 Z" fill="#3b80c6"/><path d="M1540.6 351.4 L1541 349.8 L1542.2 351 Z" fill="#f5f6fa"/><path d="M1632.5 349.2 V340.2 Q1632.5 339.2 1633.5 339.2 H1637.5 L1639 340.7 H1644.3 Q1645.3 340.7 1645.3 341.7 V343.3 H1636 Q1635 343.3 1634.6 344.2 Z" fill="#3b80c6"/><path d="M1635.6 344.3 H1647.8 Q1648.4 344.3 1648.1 345.09999999999997 L1645.8 350.5 Q1645.5 351.2 1644.8 351.2 H1632.6 Z" fill="#3b80c6"/></svg>
<div style="left:1663.8px;top:325.3px;width:91.0px;height:39.69999999999999px;background:#1f80d0;border-radius:3px;"></div>
<div style="left:1681.0px;top:337.00px;font-family:'Liberation Sans', sans-serif;font-size:14.51px;font-weight:400;color:#ffffff;-webkit-text-stroke:0.5px #ffffff;letter-spacing:-0.354px;white-space:nowrap;line-height:normal;">Save</div>
<svg style="left:0px;top:0px;" width="1760" height="380" viewBox="0 0 1760 380"><path d="M1723 339.5 Q1723 338 1724.5 338 H1734 L1737 341 V350.5 Q1737 352 1735.5 352 H1724.5 Q1723 352 1723 350.5 Z" fill="#fff"/><rect x="1725.2" y="340.5" width="7.4" height="2.8" fill="#1f80d0"/><circle cx="1730" cy="347.6" r="2" fill="#1f80d0"/></svg>
<div style="left:352.1px;top:384.8px;width:1547.6px;height:320.8px;background:#2071b9;border-radius:9px;"></div>
<svg style="left:0px;top:0px;" width="500" height="430" viewBox="0 0 500 430"><polyline points="363,406.5 369.25,413.8 375.5,406.5" fill="none" stroke="#fff" stroke-width="2" stroke-linecap="round" stroke-linejoin="round"/></svg>
<div style="left:385.2px;top:400.00px;font-family:'Liberation Sans', sans-serif;font-size:16.20px;font-weight:400;color:#ffffff;-webkit-text-stroke:0.5px #ffffff;letter-spacing:-0.122px;white-space:nowrap;line-height:normal;">Group: 1</div>
<svg style="left:0px;top:0px;" width="500" height="430" viewBox="0 0 500 430"><rect x="458.8" y="406.9" width="3.8" height="3.8" rx="0.8" fill="#fff"/><rect x="465.05" y="406.9" width="3.8" height="3.8" rx="0.8" fill="#fff"/><rect x="471.3" y="406.9" width="3.8" height="3.8" rx="0.8" fill="#fff"/></svg>
<div style="left:1371.8px;top:400.00px;font-family:'Liberation Sans', sans-serif;font-size:16.47px;font-weight:400;color:#ffffff;-webkit-text-stroke:0.45px #ffffff;letter-spacing:0.102px;white-space:nowrap;line-height:normal;">Contact Rules</div>
<svg style="left:0px;top:0px;" width="1500" height="430" viewBox="0 0 1500 430"><circle cx="1485.8" cy="406.5" r="5.3" fill="none" stroke="#fff" stroke-width="1.1"/><rect x="1485.1" y="405.2" width="1.4" height="4.2" fill="#fff"/><rect x="1484.3" y="405.2" width="1.6" height="0.9" fill="#fff"/><rect x="1484.3" y="408.6" width="3" height="0.9" fill="#fff"/><rect x="1485.1" y="402.9" width="1.4" height="1.3" fill="#fff"/></svg>
<div style="left:1540.4px;top:400.00px;font-family:'Liberation Sans', sans-serif;font-size:16.53px;font-weight:400;color:#ffffff;-webkit-text-stroke:0.45px #ffffff;letter-spacing:0.122px;white-space:nowrap;line-height:normal;">Group Total: 3,737</div>
<div style="left:1727.7px;top:394.2px;width:158.89999999999986px;height:29.80000000000001px;background:#ffffff;border-radius:5px;box-shadow:0 0 0 1px #dfe3ea inset;"></div>
<div style="left:1858.8px;top:398.4px;width:24.200000000000045px;height:22.100000000000023px;background:#e8e9ed;border-radius:4px;"></div>
<svg style="left:0px;top:0px;" width="1900" height="430" viewBox="0 0 1900 430"><polyline points="1865,406.3 1871.0,413.2 1877,406.3" fill="none" stroke="#56647e" stroke-width="2.0" stroke-linecap="round" stroke-linejoin="round"/></svg>
<div style="left:1738.8px;top:401.00px;font-family:'Liberation Sans', sans-serif;font-size:14.00px;font-weight:400;color:#333;letter-spacing:3.376px;white-space:nowrap;line-height:normal;">--</div>
<div style="left:357px;top:438.2px;width:1537.8px;height:128.59999999999997px;background:#ffffff;border-radius:10px;"></div>
<div style="left:357px;top:438.2px;width:1537.8px;height:47.60000000000002px;background:#eef8fd;border-radius:10px 10px 0 0;"></div>
<div style="left:357px;top:526.2px;width:1537.8px;height:1.0px;background:#e6e8eb;"></div>
<svg style="left:0px;top:0px;" width="1992" height="886" viewBox="0 0 1992 886"><circle cx="383.5" cy="460.7" r="4.9" fill="none" stroke="#18243a" stroke-width="2.6"/><line x1="387.3" y1="464.5" x2="391.8" y2="468.9" stroke="#18243a" stroke-width="3" stroke-linecap="round"/></svg>
<div style="left:497.7px;top:455.00px;font-family:'Liberation Sans', sans-serif;font-size:16.76px;font-weight:400;color:#4b5565;-webkit-text-stroke:0.2px #4b5565;letter-spacing:0.224px;white-space:nowrap;line-height:normal;">Job Title</div>
<div style="left:1416.0px;top:455.00px;font-family:'Liberation Sans', sans-serif;font-size:16.30px;font-weight:400;color:#4b5565;-webkit-text-stroke:0.2px #4b5565;letter-spacing:0.015px;white-space:nowrap;line-height:normal;">Records</div>
<div style="left:497.7px;top:495.00px;font-family:'Liberation Sans', sans-serif;font-size:16.68px;font-weight:400;color:#4b5565;-webkit-text-stroke:0.2px #4b5565;letter-spacing:0.055px;white-space:nowrap;line-height:normal;">Purchasing/Procurement Professional</div>
<div style="left:1423.5px;top:498.00px;font-family:'Liberation Sans', sans-serif;font-size:15.68px;font-weight:400;color:#4b5565;-webkit-text-stroke:0.2px #4b5565;letter-spacing:-0.369px;white-space:nowrap;line-height:normal;">29,121</div>
<div style="left:497.7px;top:538.00px;font-family:'Liberation Sans', sans-serif;font-size:16.57px;font-weight:400;color:#4b5565;-webkit-text-stroke:0.2px #4b5565;letter-spacing:0.152px;white-space:nowrap;line-height:normal;">Total</div>
<div style="left:1423.5px;top:539.00px;font-family:'Liberation Sans', sans-serif;font-size:15.68px;font-weight:400;color:#4b5565;-webkit-text-stroke:0.2px #4b5565;letter-spacing:-0.369px;white-space:nowrap;line-height:normal;">29,121</div>
<div style="left:1679.4px;top:447.5px;width:160.0999999999999px;height:32.299999999999955px;background:#ffffff;border-radius:5px;box-shadow:0 0 0 1px #e6e8ec inset;"></div>
<div style="left:1691.0px;top:456.00px;font-family:'Liberation Sans', sans-serif;font-size:15.67px;font-weight:400;color:#5b6474;-webkit-text-stroke:0.2px #5b6474;letter-spacing:0.563px;white-space:nowrap;line-height:normal;">--</div>
<svg style="left:0px;top:0px;" width="1992" height="886" viewBox="0 0 1992 886"><polyline points="1816.5,462.4 1823.0,469.09999999999997 1829.5,462.4" fill="none" stroke="#46536b" stroke-width="2.0" stroke-linecap="round" stroke-linejoin="round"/><path d="M1861 458.09999999999997 H1873.1 L1872.1 469.0 Q1872 469.9 1871.1 469.9 H1863 Q1862.1 469.9 1862 469.0 Z" fill="#dc2a2a"/><rect x="1859.9" y="455.0" width="14.1" height="2.1" rx="0.5" fill="#dc2a2a"/><rect x="1864.4" y="453.79999999999995" width="5.4" height="1.8" rx="0.8" fill="#dc2a2a"/></svg>
<div style="left:357px;top:572.4px;width:1537.8px;height:128.60000000000002px;background:#ffffff;border-radius:10px;"></div>
<div style="left:357px;top:572.4px;width:1537.8px;height:47.200000000000045px;background:#edfcf1;border-radius:10px 10px 0 0;"></div>
<div style="left:357px;top:660px;width:1537.8px;height:1px;background:#c9ead3;"></div>
<svg style="left:0px;top:0px;" width="1992" height="886" viewBox="0 0 1992 886"><circle cx="383.5" cy="594.8" r="4.9" fill="none" stroke="#18243a" stroke-width="2.6"/><line x1="387.3" y1="598.6" x2="391.8" y2="603.0" stroke="#18243a" stroke-width="3" stroke-linecap="round"/></svg>
<div style="left:497.7px;top:589.00px;font-family:'Liberation Sans', sans-serif;font-size:16.48px;font-weight:400;color:#4b5565;-webkit-text-stroke:0.2px #4b5565;letter-spacing:0.114px;white-space:nowrap;line-height:normal;">Engagement Score</div>
<div style="left:1416.0px;top:589.00px;font-family:'Liberation Sans', sans-serif;font-size:16.30px;font-weight:400;color:#4b5565;-webkit-text-stroke:0.2px #4b5565;letter-spacing:0.015px;white-space:nowrap;line-height:normal;">Records</div>
<div style="left:497.7px;top:629.00px;font-family:'Liberation Sans', sans-serif;font-size:16.30px;font-weight:400;color:#4b5565;-webkit-text-stroke:0.2px #4b5565;letter-spacing:-0.170px;white-space:nowrap;line-height:normal;">Bronze</div>
<div style="left:1416.0px;top:631.00px;font-family:'Liberation Sans', sans-serif;font-size:16.55px;font-weight:400;color:#4b5565;-webkit-text-stroke:0.2px #4b5565;letter-spacing:0.163px;white-space:nowrap;line-height:normal;">357,495</div>
<div style="left:497.7px;top:672.00px;font-family:'Liberation Sans', sans-serif;font-size:16.57px;font-weight:400;color:#4b5565;-webkit-text-stroke:0.2px #4b5565;letter-spacing:0.152px;white-space:nowrap;line-height:normal;">Total</div>
<div style="left:1416.0px;top:672.00px;font-family:'Liberation Sans', sans-serif;font-size:16.55px;font-weight:400;color:#4b5565;-webkit-text-stroke:0.2px #4b5565;letter-spacing:0.163px;white-space:nowrap;line-height:normal;">357,495</div>
<div style="left:1679.4px;top:581.6px;width:160.0999999999999px;height:32.299999999999955px;background:#ffffff;border-radius:5px;box-shadow:0 0 0 1px #e6e8ec inset;"></div>
<div style="left:1691.0px;top:591.00px;font-family:'Liberation Sans', sans-serif;font-size:14.72px;font-weight:400;color:#5b6474;-webkit-text-stroke:0.2px #5b6474;letter-spacing:-0.095px;white-space:nowrap;line-height:normal;">And</div>
<svg style="left:0px;top:0px;" width="1992" height="886" viewBox="0 0 1992 886"><polyline points="1816.5,596.5 1823.0,603.2 1829.5,596.5" fill="none" stroke="#46536b" stroke-width="2.0" stroke-linecap="round" stroke-linejoin="round"/><path d="M1861 592.2 H1873.1 L1872.1 603.1 Q1872 604.0 1871.1 604.0 H1863 Q1862.1 604.0 1862 603.1 Z" fill="#dc2a2a"/><rect x="1859.9" y="589.1" width="14.1" height="2.1" rx="0.5" fill="#dc2a2a"/><rect x="1864.4" y="587.9" width="5.4" height="1.8" rx="0.8" fill="#dc2a2a"/></svg>
<div style="left:1785.3px;top:723.00px;font-family:'Liberation Sans', sans-serif;font-size:16.32px;font-weight:400;color:#222;-webkit-text-stroke:0.2px #222;letter-spacing:0.324px;white-space:nowrap;line-height:normal;">Net Selected</div>
<div style="left:1774.6px;top:744.00px;font-family:'Liberation Sans', sans-serif;font-size:43.91px;font-weight:400;color:#141414;-webkit-text-stroke:0.2px #141414;letter-spacing:-0.719px;white-space:nowrap;line-height:normal;">3,737</div>
<div style="left:1750.7px;top:810.00px;font-family:'Liberation Sans', sans-serif;font-size:16.30px;font-weight:400;color:#222;-webkit-text-stroke:0.2px #222;letter-spacing:0.182px;white-space:nowrap;line-height:normal;">Copy Count</div>
<div style="left:1848.2px;top:810.00px;font-family:'Liberation Sans', sans-serif;font-size:16.31px;font-weight:400;color:#45a3f2;-webkit-text-stroke:0.2px #45a3f2;letter-spacing:0.176px;white-space:nowrap;line-height:normal;">Select</div>
<div style="left:73px;top:61px;width:128px;height:40px;box-sizing:border-box;border:5px solid #000;border-radius:0px;background:#fff;"></div>
<div style="left:88.8px;top:73.00px;font-family:'Liberation Sans', sans-serif;font-size:20.06px;font-weight:700;color:#000;letter-spacing:0.000px;white-space:nowrap;line-height:normal;transform:scaleX(0.7792);transform-origin:0 0;">Field Library</div>
<div style="left:130px;top:95px;width:4.800000000000011px;height:23.5px;background:#000;border-radius:2.4px;"></div>
<div style="left:19.2px;top:115.1px;width:319.8px;height:734.9px;box-sizing:border-box;border:5px solid #ec1c24;border-radius:0px;background:transparent;"></div>
<div style="left:338.1px;top:54px;width:155.7px;height:61.5px;box-sizing:border-box;border:5px solid #000;border-radius:0px;background:#fff;"></div>
<div style="left:352.4px;top:65.00px;font-family:'Liberation Sans', sans-serif;font-size:18.31px;font-weight:700;color:#000;letter-spacing:0.000px;white-space:nowrap;line-height:normal;transform:scaleX(0.8656);transform-origin:0 0;">Total Customers</div>
<div style="left:352.4px;top:88.00px;font-family:'Liberation Sans', sans-serif;font-size:18.31px;font-weight:700;color:#000;letter-spacing:0.000px;white-space:nowrap;line-height:normal;transform:scaleX(0.8606);transform-origin:0 0;">in your Database</div>
<div style="left:346px;top:115px;width:4.800000000000011px;height:38.69999999999999px;background:#000;border-radius:2.4px;"></div>
<div style="left:338.5px;top:151px;width:174.5px;height:70.69999999999999px;box-sizing:border-box;border:5px solid #ec1c24;border-radius:0px;background:transparent;"></div>
<div style="left:1309px;top:55px;width:617px;height:43.5px;box-sizing:border-box;border:5px solid #ec1c24;border-radius:0px;background:transparent;"></div>
<div style="left:1029px;top:55px;width:202px;height:42px;box-sizing:border-box;border:5px solid #000;border-radius:0px;background:#fff;"></div>
<div style="left:1041.0px;top:66.00px;font-family:'Liberation Sans', sans-serif;font-size:19.48px;font-weight:700;color:#000;letter-spacing:0.000px;white-space:nowrap;line-height:normal;transform:scaleX(0.8086);transform-origin:0 0;">Audience Builder Menu</div>
<div style="left:1229px;top:75.6px;width:87px;height:4.800000000000011px;background:#000;border-radius:2.4px;"></div>
<div style="left:345px;top:302.5px;width:1568px;height:427.9px;box-sizing:border-box;border:5px solid #ec1c24;border-radius:16px;background:transparent;"></div>
<div style="left:682.2px;top:727px;width:4.7999999999999545px;height:59px;background:#000;border-radius:2.4px;"></div>
<div style="left:621px;top:784.4px;width:130.89999999999998px;height:32.60000000000002px;box-sizing:border-box;border:4.6px solid #000;border-radius:0px;background:#f5f6fa;"></div>
<div style="left:629.3px;top:790.00px;font-family:'Liberation Sans', sans-serif;font-size:20.20px;font-weight:700;color:#000;letter-spacing:0.000px;white-space:nowrap;line-height:normal;transform:scaleX(0.7837);transform-origin:0 0;">Query Window</div>
<div style="left:1745.2px;top:738.3px;width:181.29999999999995px;height:56.30000000000007px;box-sizing:border-box;border:5px solid #ec1c24;border-radius:0px;background:transparent;"></div>
<div style="left:1523.5px;top:734px;width:136.29999999999995px;height:91.5px;box-sizing:border-box;border:4.7px solid #000;border-radius:0px;background:#f5f6fa;"></div>
<div style="left:1546.2px;top:747.00px;font-family:'Liberation Sans', sans-serif;font-size:19.62px;font-weight:700;color:#000;letter-spacing:0.000px;white-space:nowrap;line-height:normal;transform:scaleX(0.8279);transform-origin:0 0;">Total</div>
<div style="left:1546.2px;top:770.00px;font-family:'Liberation Sans', sans-serif;font-size:19.62px;font-weight:700;color:#000;letter-spacing:0.000px;white-space:nowrap;line-height:normal;transform:scaleX(0.7990);transform-origin:0 0;">Customers</div>
<div style="left:1546.2px;top:793.00px;font-family:'Liberation Sans', sans-serif;font-size:19.62px;font-weight:700;color:#000;letter-spacing:0.000px;white-space:nowrap;line-height:normal;transform:scaleX(0.7896);transform-origin:0 0;">Selected in</div>
<div style="left:1655px;top:766px;width:97px;height:4.7999999999999545px;background:#000;border-radius:2.4px;"></div>
</body></html>
